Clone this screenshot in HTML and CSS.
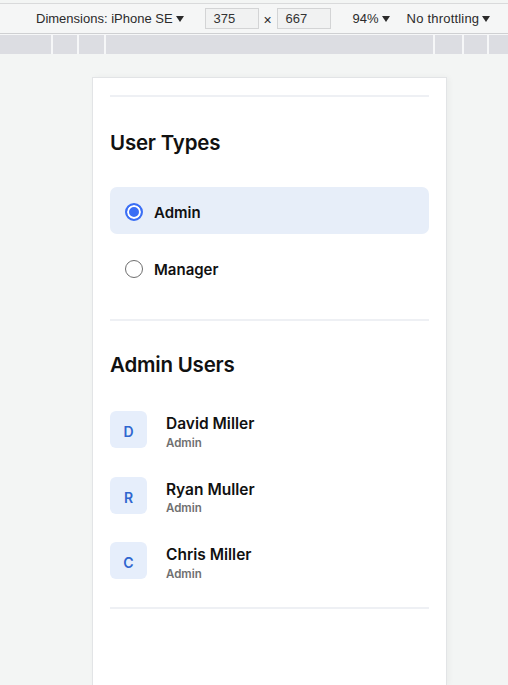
FILE: index.html
```html
<!DOCTYPE html>
<html>
<head>
<meta charset="utf-8">
<link rel="stylesheet" href="styles.css">
</head>
<body>
<div class="toolbar">
  <span class="tb-item tb-dim">Dimensions: iPhone SE<svg class="caret" viewBox="0 0 8 6"><path d="M0 0H8L4 6Z"/></svg></span>
  <span class="tb-input">375</span>
  <span class="tb-x">×</span>
  <span class="tb-input">667</span>
  <span class="tb-item tb-zoom">94%<svg class="caret" viewBox="0 0 8 6"><path d="M0 0H8L4 6Z"/></svg></span>
  <span class="tb-item tb-thr">No throttling<svg class="caret" viewBox="0 0 8 6"><path d="M0 0H8L4 6Z"/></svg></span>
</div>
<div class="ruler">
  <div></div><div></div><div></div><div></div><div></div><div></div><div></div>
</div>
<div class="canvas">
  <div class="card">
    <div class="divider first"></div>
    <h2 class="heading">User Types</h2>
    <div class="options">
      <div class="option selected"><span class="radio"></span><span class="opt-label">Admin</span></div>
      <div class="option"><span class="radio"></span><span class="opt-label">Manager</span></div>
    </div>
    <div class="divider mid"></div>
    <h2 class="heading">Admin Users</h2>
    <div class="users">
      <div class="user"><div class="avatar">D</div><div class="info"><div class="name">David Miller</div><div class="role">Admin</div></div></div>
      <div class="user"><div class="avatar">R</div><div class="info"><div class="name">Ryan Muller</div><div class="role">Admin</div></div></div>
      <div class="user"><div class="avatar">C</div><div class="info"><div class="name">Chris Miller</div><div class="role">Admin</div></div></div>
    </div>
    <div class="divider last"></div>
  </div>
</div>
</body>
</html>
```

FILE: styles.css
```css
* { box-sizing: border-box; }
html, body { margin: 0; height: 100%; }
body {
  background: #f3f5f4;
  font-family: Inter, "Liberation Sans", sans-serif;
  overflow: hidden;
  display: flex;
  flex-direction: column;
}
.toolbar {
  flex: none;
  margin-top: 3px;
  height: 31px;
  border-top: 1px solid #d9dadb;
  border-bottom: 1px solid #cfd0d2;
  background: #f5f6f6;
  display: flex;
  align-items: center;
  padding-left: 36px;
  font-family: "Liberation Sans", Arial, sans-serif;
  font-size: 13px;
  color: #2b2b2b;
}
.tb-item { display: inline-flex; align-items: center; }
.caret { width: 8px; height: 6px; margin-left: 3px; fill: #2b2b2b; }
.tb-dim { margin-right: 21px; }
.tb-input {
  width: 54px;
  height: 21px;
  border: 1px solid #d3d4d5;
  background: #f1f2f2;
  padding-left: 8px;
  line-height: 19px;
  color: #333;
}
.tb-x { width: 18px; text-align: center; font-size: 14px; margin-top: 3px; }
.tb-zoom { margin-left: 22px; margin-right: 17px; }
.tb-thr { letter-spacing: 0.2px; }
.ruler {
  flex: none;
  height: 20px;
  display: grid;
  grid-template-columns: 51px 24px 25px 327px 27px 23px 1fr;
  column-gap: 2px;
  background: #f6f7f8;
  border-top: 1px solid #f6f7f8;
}
.ruler div { background: #dcdde2; }
.canvas {
  flex: 1;
  min-height: 0;
  display: flex;
  padding: 23px 0 0 92px;
}
.card {
  width: 355px;
  background: #fff;
  border: 1px solid #e2e4e6;
  border-bottom: none;
  box-shadow: 2px 0 6px rgba(0,0,0,0.04);
  padding: 17px 17px 0 17px;
}
.divider { height: 2px; background: #eef0f4; }
.heading {
  margin: 0;
  font-size: 20.5px;
  line-height: 26px;
  font-weight: 600;
  color: #111;
  letter-spacing: -0.2px;
}
.divider.first + .heading { margin-top: 33px; }
.options {
  margin-top: 31px;
  display: flex;
  flex-direction: column;
  gap: 10px;
}
.option {
  height: 47px;
  border-radius: 7px;
  display: flex;
  align-items: center;
  padding-left: 15px;
  padding-top: 3px;
}
.option.selected { background: #e7eef9; }
.radio {
  width: 18px;
  height: 18px;
  border-radius: 50%;
  border: 1.5px solid #6e6e6e;
  background: #fff;
  flex: none;
}
.option.selected .radio {
  border: 2px solid #3a6ef5;
  box-shadow: inset 0 0 0 2px #fff;
  background: #3a6ef5;
}
.opt-label {
  margin-left: 11px;
  font-size: 15px;
  font-weight: 560;
  color: #111;
}
.divider.mid { margin-top: 28px; }
.divider.mid + .heading { margin-top: 31px; }
.users {
  margin-top: 33px;
  display: flex;
  flex-direction: column;
  gap: 28.7px;
}
.user { display: flex; align-items: flex-start; height: 37px; }
.avatar {
  width: 37px;
  height: 37px;
  border-radius: 6px;
  background: #e6eefb;
  color: #2f66cf;
  font-size: 14px;
  font-weight: 600;
  display: flex;
  align-items: center;
  justify-content: center;
  padding-top: 4px;
  flex: none;
}
.info { margin-left: 19px; padding-top: 3px; }
.name {
  font-size: 15.5px;
  line-height: 19px;
  font-weight: 560;
  color: #111;
}
.role {
  margin-top: 2.5px;
  font-size: 11.5px;
  line-height: 15px;
  font-weight: 600;
  color: #707070;
}
.divider.last { margin-top: 28px; }
```
